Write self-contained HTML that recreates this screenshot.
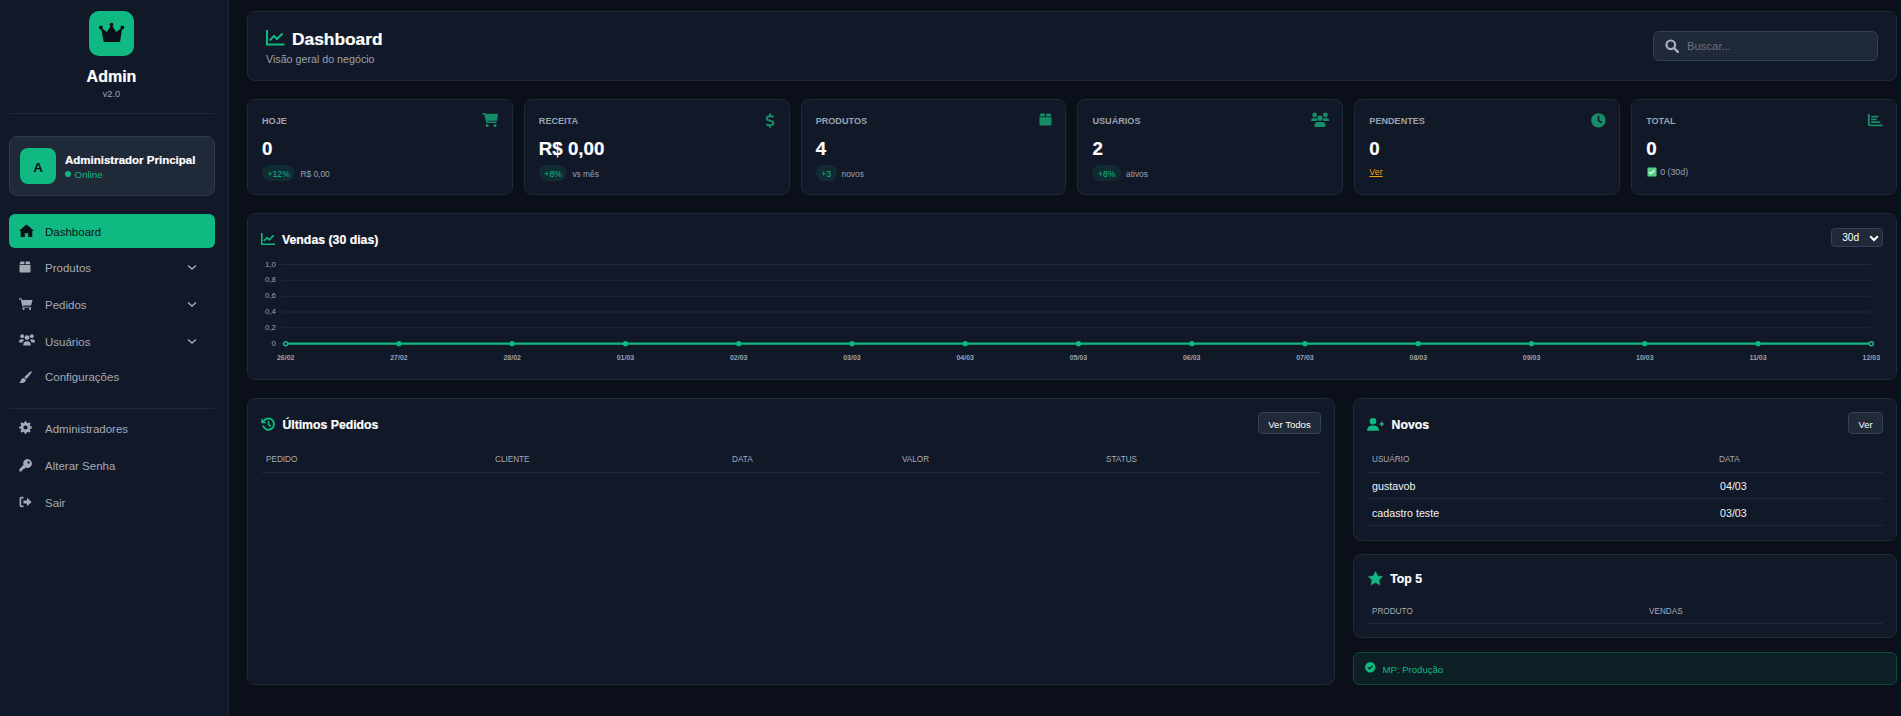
<!DOCTYPE html>
<html><head><meta charset="utf-8"><title>Dashboard</title>
<style>
html,body{margin:0;padding:0;width:1901px;height:716px;overflow:hidden;background:#0b0f19;font-family:"Liberation Sans", sans-serif;}
.t{position:absolute;white-space:nowrap;line-height:1;}
.b{position:absolute;}
.i{position:absolute;overflow:visible;}
</style></head><body>
<div class="b" style="left:0px;top:0px;width:228px;height:716px;background:#111827"></div>
<div class="b" style="left:228px;top:0px;width:1px;height:716px;background:#1f2937"></div>
<div class="b" style="left:89px;top:11px;width:45px;height:45px;background:#10b981;border-radius:10px"></div>
<svg class="i" style="left:89px;top:11px" width="45" height="45" viewBox="0 0 45 45" fill="#0b0f19"><path d="M11.8 16.5 L17.9 20.9 L22.5 13.6 L27.2 20.9 L33.3 16.5 L31 30.9 L14.8 30.9 Z"/><circle cx="11.8" cy="16.5" r="1.9"/><circle cx="22.5" cy="13.6" r="1.9"/><circle cx="33.3" cy="16.5" r="1.9"/></svg>
<div class="t" style="left:-188.50px;width:600px;text-align:center;top:69.06px;font-size:16px;font-weight:700;color:#ffffff;;-webkit-text-stroke:0.2px #ffffff">Admin</div>
<div class="t" style="left:-188.50px;width:600px;text-align:center;top:89.63px;font-size:9.3px;font-weight:400;color:#9ca3af;">v2.0</div>
<div class="b" style="left:9px;top:113px;width:206px;height:1px;background:#1f2937"></div>
<div class="b" style="left:9px;top:136px;width:206px;height:60px;background:#1f2937;border:1px solid #2d3a4d;border-radius:8px;box-sizing:border-box"></div>
<div class="b" style="left:20px;top:148px;width:36px;height:36px;background:#10b981;border-radius:8px"></div>
<div class="t" style="left:-262.00px;width:600px;text-align:center;top:161.17px;font-size:13.5px;font-weight:700;color:#0b0f19;">A</div>
<div class="t" style="left:65.00px;top:154.97px;font-size:11.5px;font-weight:700;color:#ffffff;;-webkit-text-stroke:0.2px #ffffff">Administrador Principal</div>
<div class="b" style="left:65px;top:170.7px;width:6px;height:6px;background:#10b981;border-radius:50%"></div>
<div class="t" style="left:74.60px;top:170.39px;font-size:9.7px;font-weight:400;color:#10b981;">Online</div>
<div class="b" style="left:9px;top:214px;width:206px;height:34px;background:#10b981;border-radius:6px"></div>

<svg class="i" style="left:19px;top:224px" width="15" height="13" viewBox="0 0 15 13" fill="#0b0f19"><path d="M7.5 0.5 L15 6.8 L13.3 6.8 L13.3 13 L9.2 13 L9.2 9.2 L5.8 9.2 L5.8 13 L1.7 13 L1.7 6.8 L0 6.8 Z"/></svg>
<div class="t" style="left:45.00px;top:226.87px;font-size:11.5px;font-weight:400;color:#0b0f19;">Dashboard</div>
<div class="t" style="left:45.00px;top:262.87px;font-size:11.5px;font-weight:400;color:#a3abb9;">Produtos</div>
<svg class="i" style="left:186.5px;top:263.8px" width="10" height="7" viewBox="0 0 10 7" fill="#a3abb9"><path d="M1 1.4 L5 5.1 L9 1.4" fill="none" stroke="#a3abb9" stroke-width="1.35"/></svg>
<div class="t" style="left:45.00px;top:299.87px;font-size:11.5px;font-weight:400;color:#a3abb9;">Pedidos</div>
<svg class="i" style="left:186.5px;top:300.8px" width="10" height="7" viewBox="0 0 10 7" fill="#a3abb9"><path d="M1 1.4 L5 5.1 L9 1.4" fill="none" stroke="#a3abb9" stroke-width="1.35"/></svg>
<div class="t" style="left:45.00px;top:336.87px;font-size:11.5px;font-weight:400;color:#a3abb9;">Usuários</div>
<svg class="i" style="left:186.5px;top:337.8px" width="10" height="7" viewBox="0 0 10 7" fill="#a3abb9"><path d="M1 1.4 L5 5.1 L9 1.4" fill="none" stroke="#a3abb9" stroke-width="1.35"/></svg>
<div class="t" style="left:45.00px;top:372.37px;font-size:11.5px;font-weight:400;color:#a3abb9;">Configurações</div>
<div class="b" style="left:9px;top:408px;width:206px;height:1px;background:#1f2937"></div>
<div class="t" style="left:45.00px;top:423.87px;font-size:11.5px;font-weight:400;color:#a3abb9;">Administradores</div>
<div class="t" style="left:45.00px;top:460.87px;font-size:11.5px;font-weight:400;color:#a3abb9;">Alterar Senha</div>
<div class="t" style="left:45.00px;top:497.57px;font-size:11.5px;font-weight:400;color:#a3abb9;">Sair</div>
<svg class="i" style="left:19px;top:261px" width="12" height="12" viewBox="0 0 12 12" fill="#a3abb9"><path d="M0.5 4 L11.5 4 L11.5 10.5 Q11.5 11.5 10.5 11.5 L1.5 11.5 Q0.5 11.5 0.5 10.5 Z"/><path d="M1.5 0.5 L5.4 0.5 L5.4 3.2 L0.5 3.2 Z M6.6 0.5 L10.5 0.5 L11.5 3.2 L6.6 3.2 Z"/></svg>
<svg class="i" style="left:19px;top:298px" width="14" height="12" viewBox="0 0 14 12" fill="#a3abb9"><path d="M0 0.3 L2.4 0.3 L2.9 2 L13.6 2 L12 7.6 L4 7.6 L4.3 8.8 L12.2 8.8 L12.2 9.6 L3.6 9.6 L1.8 1.4 L0 1.4 Z"/><circle cx="4.6" cy="10.9" r="1.1"/><circle cx="11" cy="10.9" r="1.1"/></svg>
<svg class="i" style="left:19px;top:334px" width="16" height="12" viewBox="0 0 16 12" fill="#a3abb9"><circle cx="3.2" cy="2.2" r="1.9"/><circle cx="12.8" cy="2.2" r="1.9"/><circle cx="8" cy="3.6" r="2.4"/><path d="M0 8 Q0 5.3 3 5.3 Q4.6 5.3 5 6 Q3.6 7 3.6 8.6 L0.3 8.6 Z M16 8 Q16 5.3 13 5.3 Q11.4 5.3 11 6 Q12.4 7 12.4 8.6 L15.7 8.6 Z M4.2 11.5 Q4.2 7.2 8 7.2 Q11.8 7.2 11.8 11.5 Z"/></svg>
<svg class="i" style="left:19px;top:371px" width="13" height="13" viewBox="0 0 13 13" fill="#a3abb9"><path d="M12.5 0.5 Q13 1 12.4 2 L7.5 8 L5.2 6.3 L11 0.8 Q12 0 12.5 0.5 Z"/><path d="M4.7 6.9 L7 8.6 Q6.8 11 4.3 11.8 Q2.4 12.4 0.4 11.8 Q1.6 10.9 1.9 9.3 Q2.3 7.2 4.7 6.9 Z"/></svg>
<svg class="i" style="left:19px;top:421px" width="13" height="13" viewBox="0 0 13 13" fill="#a3abb9"><path fill-rule="evenodd" d="M5.6 0.2 L7.4 0.2 L7.7 1.8 L8.9 2.3 L10.2 1.3 L11.7 2.8 L10.7 4.1 L11.2 5.3 L12.8 5.6 L12.8 7.4 L11.2 7.7 L10.7 8.9 L11.7 10.2 L10.2 11.7 L8.9 10.7 L7.7 11.2 L7.4 12.8 L5.6 12.8 L5.3 11.2 L4.1 10.7 L2.8 11.7 L1.3 10.2 L2.3 8.9 L1.8 7.7 L0.2 7.4 L0.2 5.6 L1.8 5.3 L2.3 4.1 L1.3 2.8 L2.8 1.3 L4.1 2.3 L5.3 1.8 Z M6.5 4.4 A2.1 2.1 0 1 0 6.5 8.6 A2.1 2.1 0 1 0 6.5 4.4 Z"/></svg>
<svg class="i" style="left:19px;top:459px" width="13" height="13" viewBox="0 0 13 13" fill="#a3abb9"><path fill-rule="evenodd" d="M8.5 0 A4.5 4.5 0 1 1 6.6 8.6 L5.3 9.9 L4 9.9 L4 11.2 L2.7 11.2 L2.7 12.5 L0.3 12.5 L0.3 10.2 L4.4 6.1 A4.5 4.5 0 0 1 8.5 0 Z M9.6 2.2 A1.2 1.2 0 1 0 9.6 4.6 A1.2 1.2 0 1 0 9.6 2.2 Z"/></svg>
<svg class="i" style="left:19px;top:496px" width="13" height="12" viewBox="0 0 13 12" fill="#a3abb9"><path d="M4.5 0.8 L2.3 0.8 Q0.6 0.8 0.6 2.5 L0.6 9.5 Q0.6 11.2 2.3 11.2 L4.5 11.2 L4.5 9.6 L2.2 9.6 L2.2 2.4 L4.5 2.4 Z"/><path d="M8 1.8 L12.6 6 L8 10.2 L8 7.6 L4.4 7.6 L4.4 4.4 L8 4.4 Z"/></svg>
<div class="b" style="left:229px;top:0px;width:1672px;height:716px;background:#0b0f19"></div>
<div class="b" style="left:247px;top:11px;width:1650px;height:70px;background:#111827;border:1px solid #1f2937;border-radius:8px;box-sizing:border-box"></div>
<svg class="i" style="left:266px;top:30px" width="19" height="16" viewBox="0 0 19 16" fill="#10b981"><path d="M1 0 L1 14.5 L18.5 14.5" fill="none" stroke="#10b981" stroke-width="2"/><path d="M3.6 10.5 L8 6 L11 9 L16.5 3.5" fill="none" stroke="#10b981" stroke-width="2"/></svg>
<div class="t" style="left:292.00px;top:30.91px;font-size:17.35px;font-weight:700;color:#ffffff;;-webkit-text-stroke:0.2px #ffffff">Dashboard</div>
<div class="t" style="left:266.00px;top:54.14px;font-size:10.7px;font-weight:400;color:#9ca3af;">Visão geral do negócio</div>
<div class="b" style="left:1653px;top:31px;width:225px;height:30px;background:#1f2937;border:1px solid #334155;border-radius:6px;box-sizing:border-box"></div>
<svg class="i" style="left:1665px;top:39px" width="14" height="14" viewBox="0 0 14 14" fill="#aab2bf"><circle cx="5.8" cy="5.8" r="4.3" fill="none" stroke="#aab2bf" stroke-width="2.2"/><path d="M9 9 L12.8 12.8" stroke="#aab2bf" stroke-width="2.4" stroke-linecap="round"/></svg>
<div class="t" style="left:1687.00px;top:41.33px;font-size:11.3px;font-weight:400;color:#6b7280;">Buscar...</div>
<div class="b" style="left:247.00px;top:99px;width:265.83px;height:96px;background:#111827;border:1px solid #1f2937;border-radius:8px;box-sizing:border-box"></div>
<div class="t" style="left:262.00px;top:116.70px;font-size:9.1px;font-weight:700;color:#9ca3af;">HOJE</div>
<div class="t" style="left:262.00px;top:140.17px;font-size:18.7px;font-weight:700;color:#ffffff;;-webkit-text-stroke:0.2px #ffffff">0</div>
<div class="b" style="left:262.00px;top:165px;width:33.39px;height:16px;background:rgba(16,185,129,0.12);border-radius:8px"></div>
<div class="t" style="left:267.50px;top:169.87px;font-size:8.66px;font-weight:400;color:#10b981;">+12%</div>
<div class="t" style="left:300.39px;top:169.80px;font-size:8.39px;font-weight:400;color:#9ca3af;">R$ 0,00</div>
<svg class="i" style="left:481.8299999999999px;top:113px" width="16" height="14" viewBox="0 0 16 14" fill="#178c69"><path d="M0.7 0 L2.6 0 Q3.4 0 3.6 0.8 L16 0.8 L15 7.8 L5.2 7.8 L5.4 8.6 L14.5 8.6 L14.5 10 L4.3 10 L2.3 1.4 L0.7 1.4 Q0 1.4 0 0.7 Q0 0 0.7 0 Z"/><circle cx="5.2" cy="12.4" r="1.5"/><circle cx="13" cy="12.4" r="1.5"/></svg>
<div class="b" style="left:523.83px;top:99px;width:265.83px;height:96px;background:#111827;border:1px solid #1f2937;border-radius:8px;box-sizing:border-box"></div>
<div class="t" style="left:538.83px;top:116.70px;font-size:9.1px;font-weight:700;color:#9ca3af;">RECEITA</div>
<div class="t" style="left:538.83px;top:140.17px;font-size:18.7px;font-weight:700;color:#ffffff;;-webkit-text-stroke:0.2px #ffffff">R$ 0,00</div>
<div class="b" style="left:538.83px;top:165px;width:28.57px;height:16px;background:rgba(16,185,129,0.12);border-radius:8px"></div>
<div class="t" style="left:544.33px;top:169.87px;font-size:8.66px;font-weight:400;color:#10b981;">+8%</div>
<div class="t" style="left:572.40px;top:169.80px;font-size:8.39px;font-weight:400;color:#9ca3af;">vs mês</div>
<svg class="i" style="left:765.3599999999999px;top:112.5px" width="10" height="15" viewBox="0 0 10 15" fill="#178c69"><path d="M5 0.6 L5 3.4 M5 12 L5 14.8" stroke="#178c69" stroke-width="2"/><path d="M8.7 3.9 Q7.6 3.2 5.2 3.2 Q1.9 3.2 1.9 5.5 Q1.9 7.2 5 7.8 Q8.3 8.4 8.3 10.2 Q8.3 12.2 5 12.2 Q2.6 12.2 1.2 11.3" fill="none" stroke="#178c69" stroke-width="2"/></svg>
<div class="b" style="left:800.66px;top:99px;width:265.83px;height:96px;background:#111827;border:1px solid #1f2937;border-radius:8px;box-sizing:border-box"></div>
<div class="t" style="left:815.66px;top:116.70px;font-size:9.1px;font-weight:700;color:#9ca3af;">PRODUTOS</div>
<div class="t" style="left:815.66px;top:140.17px;font-size:18.7px;font-weight:700;color:#ffffff;;-webkit-text-stroke:0.2px #ffffff">4</div>
<div class="b" style="left:815.66px;top:165px;width:20.87px;height:16px;background:rgba(16,185,129,0.12);border-radius:8px"></div>
<div class="t" style="left:821.16px;top:169.87px;font-size:8.66px;font-weight:400;color:#10b981;">+3</div>
<div class="t" style="left:841.53px;top:169.80px;font-size:8.39px;font-weight:400;color:#9ca3af;">novos</div>
<svg class="i" style="left:1039.49px;top:113px" width="13" height="13" viewBox="0 0 13 13" fill="#178c69"><path d="M0.5 4.3 L12.5 4.3 L12.5 11.3 Q12.5 12.5 11.3 12.5 L1.7 12.5 Q0.5 12.5 0.5 11.3 Z"/><path d="M1.6 0.5 L5.9 0.5 L5.9 3.4 L0.5 3.4 Z M7.1 0.5 L11.4 0.5 L12.5 3.4 L7.1 3.4 Z"/></svg>
<div class="b" style="left:1077.49px;top:99px;width:265.83px;height:96px;background:#111827;border:1px solid #1f2937;border-radius:8px;box-sizing:border-box"></div>
<div class="t" style="left:1092.49px;top:116.70px;font-size:9.1px;font-weight:700;color:#9ca3af;">USUÁRIOS</div>
<div class="t" style="left:1092.49px;top:140.17px;font-size:18.7px;font-weight:700;color:#ffffff;;-webkit-text-stroke:0.2px #ffffff">2</div>
<div class="b" style="left:1092.49px;top:165px;width:28.57px;height:16px;background:rgba(16,185,129,0.12);border-radius:8px"></div>
<div class="t" style="left:1097.99px;top:169.87px;font-size:8.66px;font-weight:400;color:#10b981;">+8%</div>
<div class="t" style="left:1126.06px;top:169.80px;font-size:8.39px;font-weight:400;color:#9ca3af;">ativos</div>
<svg class="i" style="left:1310.82px;top:113px" width="19" height="14" viewBox="0 0 19 14" fill="#178c69"><circle cx="3.6" cy="1.9" r="2.4"/><circle cx="14.4" cy="1.9" r="2.4"/><circle cx="9" cy="5.3" r="2.7"/><path d="M0 7.9 Q0 5 3 5 L4.2 5 Q5.6 5 6 6 L6 7.9 Z M18.2 7.9 Q18.2 5 15.2 5 L14 5 Q12.6 5 12.2 6 L12.2 7.9 Z M3.6 14 L3.6 12 Q3.6 9 6.6 9 L11.4 9 Q14.4 9 14.4 12 L14.4 14 Z"/></svg>
<div class="b" style="left:1354.32px;top:99px;width:265.83px;height:96px;background:#111827;border:1px solid #1f2937;border-radius:8px;box-sizing:border-box"></div>
<div class="t" style="left:1369.32px;top:116.70px;font-size:9.1px;font-weight:700;color:#9ca3af;">PENDENTES</div>
<div class="t" style="left:1369.32px;top:140.17px;font-size:18.7px;font-weight:700;color:#ffffff;;-webkit-text-stroke:0.2px #ffffff">0</div>
<div class="t" style="left:1369.32px;top:168.07px;font-size:8.9px;font-weight:400;color:#f59e0b;text-decoration:underline">Ver</div>
<svg class="i" style="left:1590.9499999999998px;top:112.5px" width="15" height="15" viewBox="0 0 15 15" fill="#178c69"><circle cx="7.4" cy="7.4" r="7.15"/><path d="M7.5 3.2 L7.5 7.6 L10.3 9.5" fill="none" stroke="#111827" stroke-width="1.6" stroke-linecap="round"/></svg>
<div class="b" style="left:1631.15px;top:99px;width:265.83px;height:96px;background:#111827;border:1px solid #1f2937;border-radius:8px;box-sizing:border-box"></div>
<div class="t" style="left:1646.15px;top:116.70px;font-size:9.1px;font-weight:700;color:#9ca3af;">TOTAL</div>
<div class="t" style="left:1646.15px;top:140.17px;font-size:18.7px;font-weight:700;color:#ffffff;;-webkit-text-stroke:0.2px #ffffff">0</div>
<svg class="i" style="left:1646.75px;top:166.6px" width="10" height="10" viewBox="0 0 10 10"><rect x="0.5" y="0.5" width="9" height="9" rx="0.6" fill="#55cf84"/><path d="M2.2 5.4 L3.8 6.8 L7.3 3.4" fill="none" stroke="#f0fff4" stroke-width="1.2" stroke-linecap="round"/></svg>
<div class="t" style="left:1660.15px;top:168.12px;font-size:8.84px;font-weight:400;color:#9ca3af;">0 (30d)</div>
<svg class="i" style="left:1866.9799999999998px;top:113.5px" width="16" height="13" viewBox="0 0 16 13" fill="#178c69"><path d="M1.8 0.6 L1.8 10.2 Q1.8 11.4 3 11.4 L14.9 11.4" fill="none" stroke="#178c69" stroke-width="1.9" stroke-linecap="round"/><rect x="4" y="1.7" width="7.6" height="1.75" rx="0.85"/><rect x="4" y="4.55" width="5.8" height="1.8" rx="0.9"/><rect x="4" y="7.35" width="9.3" height="1.7" rx="0.85"/></svg>
<div class="b" style="left:247px;top:213px;width:1650px;height:167px;background:#111827;border:1px solid #1f2937;border-radius:8px;box-sizing:border-box"></div>
<svg class="i" style="left:261px;top:233px" width="14" height="12" viewBox="0 0 14 12" fill="#10b981"><path d="M0.8 0 L0.8 11.2 L14 11.2" fill="none" stroke="#10b981" stroke-width="1.6"/><path d="M2.8 8 L6 4.6 L8.2 6.8 L12.6 2.4" fill="none" stroke="#10b981" stroke-width="1.6"/></svg>
<div class="t" style="left:282.00px;top:233.89px;font-size:12.3px;font-weight:700;color:#ffffff;;-webkit-text-stroke:0.2px #ffffff">Vendas (30 dias)</div>
<div class="b" style="left:1831px;top:228px;width:52px;height:19px;background:#1f2937;border:1px solid #334155;border-radius:4px;box-sizing:border-box"></div>
<div class="t" style="left:1842.20px;top:232.77px;font-size:10.2px;font-weight:400;color:#ffffff;">30d</div>
<svg class="i" style="left:1869px;top:235px" width="10" height="7" viewBox="0 0 10 7" fill="#fff"><path d="M1.2 1.2 L5 5 L8.8 1.2" fill="none" stroke="#ffffff" stroke-width="2"/></svg>
<svg class="i" style="left:0;top:0" width="1901" height="716"><line x1="279" y1="264.5" x2="1871.5" y2="264.5" stroke="#1f2937" stroke-width="1"/><line x1="279" y1="280.3" x2="1871.5" y2="280.3" stroke="#1f2937" stroke-width="1"/><line x1="279" y1="296.2" x2="1871.5" y2="296.2" stroke="#1f2937" stroke-width="1"/><line x1="279" y1="312" x2="1871.5" y2="312" stroke="#1f2937" stroke-width="1"/><line x1="279" y1="327.8" x2="1871.5" y2="327.8" stroke="#1f2937" stroke-width="1"/><line x1="279" y1="343.7" x2="1871.5" y2="343.7" stroke="#1f2937" stroke-width="1"/><line x1="285.8" y1="264" x2="285.8" y2="349" stroke="#1a2230" stroke-width="1"/><line x1="285.7" y1="343.7" x2="1871.3" y2="343.7" stroke="#10b981" stroke-width="2.2"/><circle cx="285.70" cy="343.7" r="2.0" fill="#111827" stroke="#10b981" stroke-width="1.5"/><circle cx="398.96" cy="343.7" r="2.6" fill="#10b981"/><circle cx="512.21" cy="343.7" r="2.6" fill="#10b981"/><circle cx="625.47" cy="343.7" r="2.6" fill="#10b981"/><circle cx="738.73" cy="343.7" r="2.6" fill="#10b981"/><circle cx="851.99" cy="343.7" r="2.6" fill="#10b981"/><circle cx="965.24" cy="343.7" r="2.6" fill="#10b981"/><circle cx="1078.50" cy="343.7" r="2.6" fill="#10b981"/><circle cx="1191.76" cy="343.7" r="2.6" fill="#10b981"/><circle cx="1305.01" cy="343.7" r="2.6" fill="#10b981"/><circle cx="1418.27" cy="343.7" r="2.6" fill="#10b981"/><circle cx="1531.53" cy="343.7" r="2.6" fill="#10b981"/><circle cx="1644.79" cy="343.7" r="2.6" fill="#10b981"/><circle cx="1758.04" cy="343.7" r="2.6" fill="#10b981"/><circle cx="1871.30" cy="343.7" r="2.0" fill="#111827" stroke="#10b981" stroke-width="1.5"/></svg>
<div class="t" style="left:-324.00px;width:600px;text-align:right;top:260.51px;font-size:7.9px;font-weight:400;color:#9ca3af;">1,0</div>
<div class="t" style="left:-324.00px;width:600px;text-align:right;top:276.31px;font-size:7.9px;font-weight:400;color:#9ca3af;">0,8</div>
<div class="t" style="left:-324.00px;width:600px;text-align:right;top:292.21px;font-size:7.9px;font-weight:400;color:#9ca3af;">0,6</div>
<div class="t" style="left:-324.00px;width:600px;text-align:right;top:308.01px;font-size:7.9px;font-weight:400;color:#9ca3af;">0,4</div>
<div class="t" style="left:-324.00px;width:600px;text-align:right;top:323.81px;font-size:7.9px;font-weight:400;color:#9ca3af;">0,2</div>
<div class="t" style="left:-324.00px;width:600px;text-align:right;top:339.71px;font-size:7.9px;font-weight:400;color:#9ca3af;">0</div>
<div class="t" style="left:-14.30px;width:600px;text-align:center;top:353.65px;font-size:7.03px;font-weight:700;color:#9ca3af;">26/02</div>
<div class="t" style="left:98.96px;width:600px;text-align:center;top:353.65px;font-size:7.03px;font-weight:700;color:#9ca3af;">27/02</div>
<div class="t" style="left:212.21px;width:600px;text-align:center;top:353.65px;font-size:7.03px;font-weight:700;color:#9ca3af;">28/02</div>
<div class="t" style="left:325.47px;width:600px;text-align:center;top:353.65px;font-size:7.03px;font-weight:700;color:#9ca3af;">01/03</div>
<div class="t" style="left:438.73px;width:600px;text-align:center;top:353.65px;font-size:7.03px;font-weight:700;color:#9ca3af;">02/03</div>
<div class="t" style="left:551.99px;width:600px;text-align:center;top:353.65px;font-size:7.03px;font-weight:700;color:#9ca3af;">03/03</div>
<div class="t" style="left:665.24px;width:600px;text-align:center;top:353.65px;font-size:7.03px;font-weight:700;color:#9ca3af;">04/03</div>
<div class="t" style="left:778.50px;width:600px;text-align:center;top:353.65px;font-size:7.03px;font-weight:700;color:#9ca3af;">05/03</div>
<div class="t" style="left:891.76px;width:600px;text-align:center;top:353.65px;font-size:7.03px;font-weight:700;color:#9ca3af;">06/03</div>
<div class="t" style="left:1005.01px;width:600px;text-align:center;top:353.65px;font-size:7.03px;font-weight:700;color:#9ca3af;">07/03</div>
<div class="t" style="left:1118.27px;width:600px;text-align:center;top:353.65px;font-size:7.03px;font-weight:700;color:#9ca3af;">08/03</div>
<div class="t" style="left:1231.53px;width:600px;text-align:center;top:353.65px;font-size:7.03px;font-weight:700;color:#9ca3af;">09/03</div>
<div class="t" style="left:1344.79px;width:600px;text-align:center;top:353.65px;font-size:7.03px;font-weight:700;color:#9ca3af;">10/03</div>
<div class="t" style="left:1458.04px;width:600px;text-align:center;top:353.65px;font-size:7.03px;font-weight:700;color:#9ca3af;">11/03</div>
<div class="t" style="left:1571.30px;width:600px;text-align:center;top:353.65px;font-size:7.03px;font-weight:700;color:#9ca3af;">12/03</div>
<div class="b" style="left:247px;top:398px;width:1088px;height:287px;background:#111827;border:1px solid #1f2937;border-radius:8px;box-sizing:border-box"></div>
<svg class="i" style="left:261px;top:417px" width="14" height="14" viewBox="0 0 14 14" fill="#10b981"><path d="M2.6 4.2 A5.6 5.6 0 1 1 2 8.6" fill="none" stroke="#10b981" stroke-width="1.9"/><path d="M0.3 1.2 L0.3 6.2 L5.3 6.2 Z"/><path d="M7.5 4 L7.5 7.5 L9.8 9.4" fill="none" stroke="#10b981" stroke-width="1.6"/></svg>
<div class="t" style="left:282.40px;top:419.23px;font-size:12.25px;font-weight:700;color:#ffffff;;-webkit-text-stroke:0.2px #ffffff">Últimos Pedidos</div>
<div class="b" style="left:1258px;top:412px;width:63px;height:22px;background:#1f2937;border:1px solid #334155;border-radius:4px;box-sizing:border-box"></div>
<div class="t" style="left:989.50px;width:600px;text-align:center;top:419.97px;font-size:9.6px;font-weight:400;color:#ffffff;">Ver Todos</div>
<div class="t" style="left:266.00px;top:454.81px;font-size:9.2px;font-weight:400;color:#a7adb8;;transform:scaleX(0.89);transform-origin:left top">PEDIDO</div>
<div class="t" style="left:495.00px;top:454.81px;font-size:9.2px;font-weight:400;color:#a7adb8;;transform:scaleX(0.89);transform-origin:left top">CLIENTE</div>
<div class="t" style="left:732.00px;top:454.81px;font-size:9.2px;font-weight:400;color:#a7adb8;;transform:scaleX(0.89);transform-origin:left top">DATA</div>
<div class="t" style="left:902.00px;top:454.81px;font-size:9.2px;font-weight:400;color:#a7adb8;;transform:scaleX(0.89);transform-origin:left top">VALOR</div>
<div class="t" style="left:1106.00px;top:454.81px;font-size:9.2px;font-weight:400;color:#a7adb8;;transform:scaleX(0.89);transform-origin:left top">STATUS</div>
<div class="b" style="left:262px;top:472px;width:1059px;height:1px;background:#1f2937"></div>
<div class="b" style="left:1353px;top:398px;width:544px;height:143px;background:#111827;border:1px solid #1f2937;border-radius:8px;box-sizing:border-box"></div>
<svg class="i" style="left:1367px;top:418px" width="18" height="13" viewBox="0 0 18 13" fill="#10b981"><circle cx="6" cy="3.3" r="3.3"/><path d="M0 12.8 Q0 7.6 6 7.6 Q12 7.6 12 12.8 Z"/><path d="M14.7 3.8 L14.7 8.2 M12.5 6 L16.9 6" stroke="#10b981" stroke-width="1.4"/></svg>
<div class="t" style="left:1391.60px;top:419.41px;font-size:12.27px;font-weight:700;color:#ffffff;;-webkit-text-stroke:0.2px #ffffff">Novos</div>
<div class="b" style="left:1848px;top:412px;width:35px;height:22px;background:#1f2937;border:1px solid #334155;border-radius:4px;box-sizing:border-box"></div>
<div class="t" style="left:1565.50px;width:600px;text-align:center;top:420.14px;font-size:9.4px;font-weight:400;color:#ffffff;">Ver</div>
<div class="t" style="left:1372.00px;top:455.01px;font-size:9.2px;font-weight:400;color:#a7adb8;;transform:scaleX(0.89);transform-origin:left top">USUÁRIO</div>
<div class="t" style="left:1719.00px;top:455.01px;font-size:9.2px;font-weight:400;color:#a7adb8;;transform:scaleX(0.89);transform-origin:left top">DATA</div>
<div class="b" style="left:1368px;top:472px;width:515px;height:1px;background:#1f2937"></div>
<div class="t" style="left:1372.00px;top:481.04px;font-size:10.7px;font-weight:400;color:#f3f4f6;">gustavob</div>
<div class="t" style="left:1720.00px;top:481.04px;font-size:10.7px;font-weight:400;color:#f3f4f6;">04/03</div>
<div class="b" style="left:1368px;top:498px;width:515px;height:1px;background:#1f2937"></div>
<div class="t" style="left:1372.00px;top:507.74px;font-size:10.7px;font-weight:400;color:#f3f4f6;">cadastro teste</div>
<div class="t" style="left:1720.00px;top:507.74px;font-size:10.7px;font-weight:400;color:#f3f4f6;">03/03</div>
<div class="b" style="left:1368px;top:525px;width:515px;height:1px;background:#1f2937"></div>
<div class="b" style="left:1353px;top:554px;width:544px;height:84px;background:#111827;border:1px solid #1f2937;border-radius:8px;box-sizing:border-box"></div>
<svg class="i" style="left:1367.5px;top:570.5px" width="15" height="14.5" viewBox="0 0 15 14.5" fill="#10b981"><path d="M7.5 0.2 L9.7 4.9 L14.8 5.5 L11 9 L12.1 14.1 L7.5 11.5 L2.9 14.1 L4 9 L0.2 5.5 L5.3 4.9 Z" stroke="#10b981" stroke-width="0.4" stroke-linejoin="round"/></svg>
<div class="t" style="left:1390.20px;top:572.71px;font-size:12.27px;font-weight:700;color:#ffffff;;-webkit-text-stroke:0.2px #ffffff">Top 5</div>
<div class="t" style="left:1372.00px;top:607.01px;font-size:9.2px;font-weight:400;color:#a7adb8;;transform:scaleX(0.89);transform-origin:left top">PRODUTO</div>
<div class="t" style="left:1649.00px;top:607.01px;font-size:9.2px;font-weight:400;color:#a7adb8;;transform:scaleX(0.89);transform-origin:left top">VENDAS</div>
<div class="b" style="left:1368px;top:623px;width:515px;height:1px;background:#1f2937"></div>
<div class="b" style="left:1353px;top:652px;width:544px;height:33px;background:#0c1f24;border:1px solid #0f4a3c;border-radius:6px;box-sizing:border-box"></div>
<svg class="i" style="left:1365px;top:662px" width="10.5" height="10.5" viewBox="0 0 10.5 10.5" fill="#10b981"><circle cx="5.25" cy="5.25" r="5.2"/><path d="M2.9 5.4 L4.5 6.9 L7.5 3.8" fill="none" stroke="#0e1f22" stroke-width="1.3"/></svg>
<div class="t" style="left:1382.60px;top:665.02px;font-size:9.55px;font-weight:400;color:#10b981;">MP: Produção</div>
</body></html>
